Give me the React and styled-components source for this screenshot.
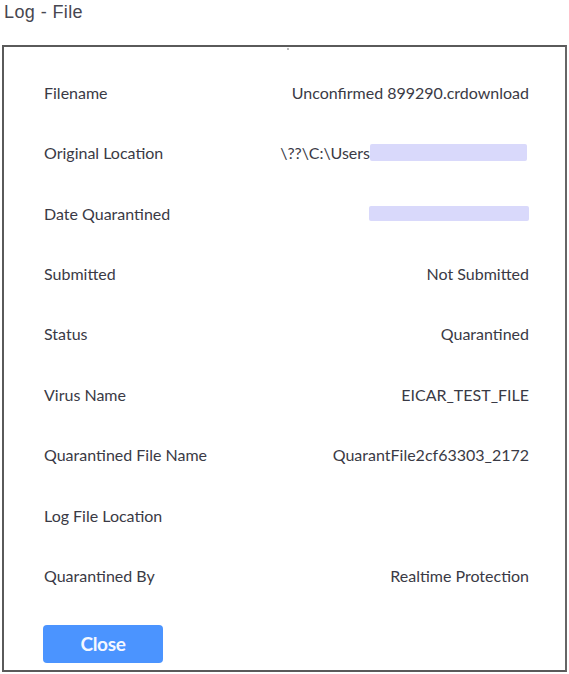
import React from "react";
import styled, { createGlobalStyle } from "styled-components";

const GlobalStyle = createGlobalStyle`
  body {
    margin: 0;
    background: #ffffff;
    font-family: "Lato", "Liberation Sans", sans-serif;
  }
`;

const Page = styled.div`
  width: 569px;
  height: 674px;
  padding: 0 2px 2px 2px;
  box-sizing: border-box;
  display: flex;
  flex-direction: column;
`;

const Title = styled.div`
  font-family: "Liberation Sans", Arial, sans-serif;
  font-size: 18px;
  letter-spacing: 0.4px;
  color: #474750;
  height: 45px;
  line-height: 24px;
  padding-left: 2px;
`;

const Dialog = styled.div`
  flex: 1;
  border: 2px solid #5a5a5a;
  border-right-color: #666;
  display: flex;
  flex-direction: column;
  padding: 15px 36px 0 40px;
  position: relative;
`;

const Tick = styled.span`
  position: absolute;
  top: 1px;
  left: 283px;
  width: 2px;
  height: 2px;
  background: #bbbbbb;
`;

const Rows = styled.div`
  display: grid;
  grid-auto-rows: 60.45px;
`;

const Row = styled.div`
  display: flex;
  align-items: center;
  justify-content: space-between;
  font-size: 16px;
  color: #3a3a45;
`;

const Label = styled.span``;

const Value = styled.span`
  display: flex;
  align-items: center;
`;

const Blur = styled.span`
  display: inline-block;
  width: ${(p) => p.w}px;
  height: ${(p) => p.h}px;
  background: #d9d9fb;
  border-radius: 2px;
  margin-right: ${(p) => p.mr || 0}px;
`;

const Footer = styled.div`
  padding-top: 19px;
`;

const CloseButton = styled.button`
  width: 120px;
  height: 38px;
  margin-left: -1px;
  border: none;
  border-radius: 4px;
  background: #4b94ff;
  color: #f4f7ff;
  font-family: "Lato", "Liberation Sans", sans-serif;
  font-size: 19px;
  font-weight: 700;
  letter-spacing: -0.3px;
  cursor: pointer;
`;

const rows = [
  { label: "Filename", value: "Unconfirmed 899290.crdownload" },
  { label: "Original Location", value: "\\??\\C:\\Users", blur: { w: 157, h: 17, mr: 2 } },
  { label: "Date Quarantined", blur: { w: 160, h: 15 } },
  { label: "Submitted", value: "Not Submitted" },
  { label: "Status", value: "Quarantined" },
  { label: "Virus Name", value: "EICAR_TEST_FILE" },
  { label: "Quarantined File Name", value: "QuarantFile2cf63303_2172" },
  { label: "Log File Location", value: "" },
  { label: "Quarantined By", value: "Realtime Protection" },
];

export default function App() {
  return (
    <>
      <GlobalStyle />
      <Page>
        <Title>Log - File</Title>
        <Dialog>
          <Tick />
          <Rows>
            {rows.map((r) => (
              <Row key={r.label}>
                <Label>{r.label}</Label>
                <Value>
                  {r.value}
                  {r.blur && <Blur w={r.blur.w} h={r.blur.h} mr={r.blur.mr} />}
                </Value>
              </Row>
            ))}
          </Rows>
          <Footer>
            <CloseButton>Close</CloseButton>
          </Footer>
        </Dialog>
      </Page>
    </>
  );
}
